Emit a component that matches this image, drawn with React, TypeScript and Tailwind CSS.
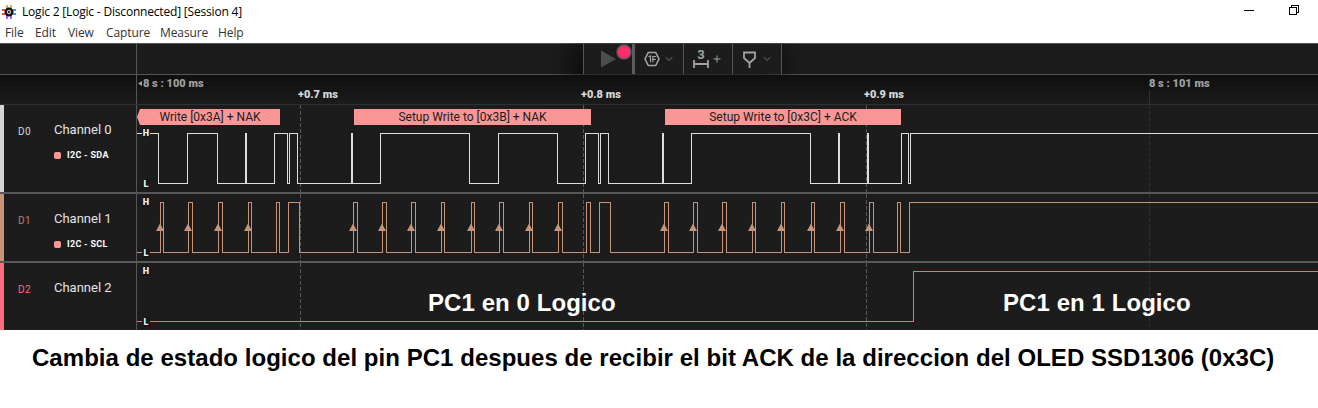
import type { ReactNode } from "react";

type Pulse = [number, number];

const SDA: Pulse[] = [
  [-10, 21], [50, 80], [108, 109], [137, 150], [152, 160], [214, 215], [243, 332],
  [361, 420], [448, 461], [463, 471], [525, 526], [554, 673], [701, 702], [730, 731],
  [764, 771], [773, 1200],
];
const CLOCKS: Pulse[] = [
  [23, 26], [51, 55], [81, 85], [111, 114], [216, 220], [245, 249], [274, 278], [304, 307],
  [334, 337], [362, 366], [392, 395], [421, 425], [527, 531], [556, 560], [585, 589],
  [615, 618], [644, 647], [674, 677], [703, 707], [732, 736],
];
const SCL: Pulse[] = [
  ...CLOCKS, [139, 142], [151, 162], [449, 453], [462, 473], [760, 763], [772, 1200],
].sort((a, b) => a[0] - b[0]) as Pulse[];
const OUT: Pulse[] = [[776, 1200]];

function wavePath(pulses: Pulse[], high: number, low: number) {
  let d = `M-20 ${low + 0.5}`;
  for (const [a, b] of pulses) {
    d += `H${a + 0.5}V${high + 0.5}H${b + 0.5}V${low + 0.5}`;
  }
  return d;
}

function Level({ children }: { children: ReactNode }) {
  return (
    <span className="h-[10px] w-[8px] bg-[#161616] text-center font-['Roboto'] text-[9px] leading-[11px] font-black text-[#eeeeee]">
      {children}
    </span>
  );
}

function Bubble({ children, className }: { children: ReactNode; className: string }) {
  return (
    <div className={`h-4 shrink-0 bg-[#f99797] text-center font-['Roboto'] text-[12px] leading-[16px] whitespace-nowrap text-[#1b1b1b] ${className}`}>
      {children}
    </div>
  );
}

interface ChannelProps {
  id: string;
  name: string;
  analyzer?: string;
  bar: string;
  idColor: string;
  height: string;
  infoPad: string;
  levelPad: string;
  pulses: Pulse[];
  high: number;
  stroke: string;
  clocks?: Pulse[];
  last?: boolean;
  children?: ReactNode;
}

function Channel(p: ChannelProps) {
  return (
    <div className={`flex w-full shrink-0 ${p.height} ${p.last ? "" : "border-b-2 border-[#57575c]"}`}>
      <div className={`w-1 shrink-0 ${p.bar}`} />
      <div className={`flex w-[133px] shrink-0 border-r border-[#56565a] pl-[14px] font-['Roboto'] ${p.infoPad}`}>
        <div className={`w-9 shrink-0 pt-[2px] text-[10px] leading-[15px] tracking-[0.4px] ${p.idColor}`}>{p.id}</div>
        <div className="whitespace-nowrap text-[#e3e3e3]">
          <div className="text-[13px] leading-[16px]">{p.name}</div>
          {p.analyzer && (
            <div className="mt-[11px] flex items-center gap-[6px] text-[9px] leading-[12px] font-bold tracking-[0.3px] text-white">
              <i className="size-[7px] rounded-[2px] bg-[#f99797]" />
              {p.analyzer}
            </div>
          )}
        </div>
      </div>
      <div className="relative min-w-0 flex-1 overflow-hidden">
        <svg className="absolute inset-0 h-full w-full" shapeRendering="crispEdges" fill="none">
          {[163, 446, 729, 1012].map((x) => (
            <path key={x} d={`M${x + 0.5} 0V90`} stroke={x === 1012 ? "#303033" : "#58585b"} strokeDasharray="4 2" />
          ))}
          <path d={wavePath(p.pulses, p.high, p.high + 50)} stroke={p.stroke} />
          {p.clocks?.map(([x]) => (
            <path key={x} d={`M${x} ${p.high + 21.5}l4 7.500h-8z`} fill={p.stroke} shapeRendering="auto" />
          ))}
        </svg>
        {p.children}
        <div className={`absolute inset-y-0 left-[5px] flex flex-col gap-[41px] ${p.levelPad}`}>
          <Level>H</Level>
          <Level>L</Level>
        </div>
      </div>
    </div>
  );
}

function Chevron() {
  return (
    <svg width="8" height="6" viewBox="0 0 8 6" fill="none" stroke="#77777a">
      <path d="M.8 1.2 4 4.4 7.2 1.2" />
    </svg>
  );
}

function Toolbar() {
  return (
    <div className="flex h-[30px] w-[199px] border-x border-[#56565a] bg-[#1c1c1c] shadow-[-6px_8px_24px_8px_#0008]">
      <div className="flex w-[51px] shrink-0 items-center border-r-[3px] border-[#5b5b62]">
        <svg width="48" height="30" viewBox="0 0 48 30">
          <path d="M17 6.500v17l15-8.500z" fill="#4d4d4d" />
          <circle cx="40" cy="8" r="7" fill="#ff2d6b" stroke="#58585f" strokeWidth="1.500" />
        </svg>
      </div>
      <div className="flex w-[49px] shrink-0 items-center gap-[5px] border-r border-[#56565a] pl-[9px]">
        <svg width="16" height="16" viewBox="0 0 16 16" fill="none" stroke="#a3a3a3" strokeWidth="1.600">
          <path d="M4.300 1.500h7.400L15 8l-3.300 6.500H4.300L1 8z" />
          <path d="M4.500 5.800 6.500 5v6.200M8.800 11.200V5.500h3.400M8.800 8.300h3" strokeWidth="1.200" />
        </svg>
        <Chevron />
      </div>
      <div className="flex w-[49px] shrink-0 items-center gap-[4px] border-r border-[#56565a] pl-[9px]">
        <div className="flex flex-col items-center font-['Roboto'] text-[13px] leading-[10px] font-bold text-[#a3a3a3]">
          3
          <svg width="16" height="8" viewBox="0 0 16 8" fill="none" stroke="#a3a3a3" strokeWidth="1.800">
            <path d="M1 0v8M15 0v8M1 4h14" />
          </svg>
        </div>
        <svg className="mb-px" width="8" height="8" stroke="#a3a3a3"><path d="M4 .5v7M.5 4h7" /></svg>
      </div>
      <div className="flex flex-1 items-center gap-[7px] pl-[10px]">
        <svg width="13" height="17" viewBox="0 0 13 17" fill="none" stroke="#a3a3a3" strokeWidth="1.800">
          <path d="M1 1.500h11V7l-5.500 5L1 7zM6.500 12v5" />
        </svg>
        <Chevron />
      </div>
    </div>
  );
}

function AppIcon() {
  return (
    <svg width="14" height="14" viewBox="0 0 14 14">
      <g strokeWidth="1.800">
        <path d="M5 0v3M9 0v3" stroke="#e6a23c" />
        <path d="M5 11v3M9 11v3" stroke="#9b59f0" />
        <path d="M0 5h3M0 9h3" stroke="#ef4956" />
        <path d="M11 5h3M11 9h3" stroke="#3aa0e8" />
      </g>
      <circle cx="7" cy="7" r="4.500" fill="#111" />
      <circle cx="7" cy="7" r="1.800" fill="#333" stroke="#ddd" />
    </svg>
  );
}

export default function App() {
  return (
    <div className="flex h-[408px] w-[1318px] flex-col overflow-hidden bg-white">
      <header className="h-[43px] shrink-0 font-['Open_Sans'] text-[12px] text-black">
        <div className="flex h-[23px] items-center pl-[2px]">
          <AppIcon />
          <span className="ml-[6px] text-[12px] tracking-[-0.19px]">Logic 2 [Logic - Disconnected] [Session 4]</span>
          <svg className="mr-[17px] mb-[3px] ml-auto" width="58" height="12" fill="none" stroke="#000" shapeRendering="crispEdges">
            <path d="M1 6.500h10M46.500 3.500h7v7h-7zM48.500 3V1.500h7v7h-2" />
          </svg>
        </div>
        <nav className="flex h-5 items-center pl-[5px] tracking-[-0.1px] text-[#333333]">
          <span className="w-[30px]">File</span>
          <span className="w-[33px]">Edit</span>
          <span className="w-[38px]">View</span>
          <span className="w-[54px]">Capture</span>
          <span className="w-[58px]">Measure</span>
          <span>Help</span>
        </nav>
      </header>

      <main className="flex h-[287px] shrink-0 flex-col overflow-hidden bg-[#1c1c1c]">
        <div className="flex h-8 shrink-0 border-y border-[#56565a]">
          <div className="w-[137px] shrink-0 border-r border-[#56565a]" />
          <div className="ml-[446px]"><Toolbar /></div>
        </div>
        <div className="flex h-[30px] shrink-0 border-b border-[#303033] bg-linear-to-b from-[#0f0f0f] to-[#1b1b1b]">
          <div className="w-[137px] shrink-0 border-r border-[#56565a]" />
          <div className="relative flex-1 font-['Roboto'] text-[11px] leading-[12px] font-black whitespace-nowrap text-[#d8d8d8]">
            <svg className="absolute top-[6px] left-[1px]" width="4" height="6"><path d="M4 0v5L0 2.500z" fill="#a0a0a0" /></svg>
            <span className="absolute top-[3px] left-[6px] text-[#a0a0a0]">8 s : 100 ms</span>
            <span className="absolute top-[14px] left-[161px]">+0.7 ms</span>
            <span className="absolute top-[14px] left-[444px]">+0.8 ms</span>
            <span className="absolute top-[14px] left-[727px]">+0.9 ms</span>
            <span className="absolute top-[3px] left-[1012px] text-[#a0a0a0]">8 s : 101 ms</span>
            <i className="absolute top-[15px] left-[1012px] h-[15px] w-px bg-[#303033]" />
          </div>
        </div>

        <Channel
          id="D0" name="Channel 0" analyzer="I2C - SDA" height="h-[89px]"
          bar="bg-[#d3d5d6]" idColor="text-[#d5d5d5]" infoPad="pt-[17px]" levelPad="pt-[23px]"
          pulses={SDA} high={28} stroke="#dedede"
        >
          <div className="relative flex pt-1">
            <Bubble className="w-[143px] pl-[3px] [clip-path:polygon(0_50%,3px_0,100%_0,100%_100%,3px_100%)]">
              Write [0x3A] + NAK
            </Bubble>
            <Bubble className="ml-[74px] w-[237px]">Setup Write to [0x3B] + NAK</Bubble>
            <Bubble className="ml-[74px] w-[236px]">Setup Write to [0x3C] + ACK</Bubble>
          </div>
        </Channel>
        <Channel
          id="D1" name="Channel 1" analyzer="I2C - SCL" height="h-[69px]"
          bar="bg-[#c79479]" idColor="text-[#bd8061]" infoPad="pt-[17px]" levelPad="pt-[3px]"
          pulses={SCL} clocks={CLOCKS} high={8} stroke="#c79479"
        />
        <Channel
          id="D2" name="Channel 2" height="h-[67px]"
          bar="bg-[#ff6b7e]" idColor="text-[#ff6b7e]" infoPad="pt-[17px]" levelPad="pt-[3px]"
          pulses={OUT} high={8} stroke="#f96b7b" last
        >
          <div className="relative flex pt-[26px] font-['Liberation_Sans'] text-[24px] leading-[28px] font-bold tracking-[0.07px] whitespace-nowrap text-white">
            <span className="ml-[291px] w-[575px]">PC1 en 0 Logico</span>
            <span>PC1 en 1 Logico</span>
          </div>
        </Channel>
      </main>

      <p className="pt-[14px] pl-[32px] font-['Liberation_Sans'] text-[24px] leading-[28px] font-bold tracking-[0.04px] whitespace-nowrap text-black">
        Cambia de estado logico del pin PC1 despues de recibir el bit ACK de la direccion del OLED SSD1306 (0x3C)
      </p>
    </div>
  );
}
